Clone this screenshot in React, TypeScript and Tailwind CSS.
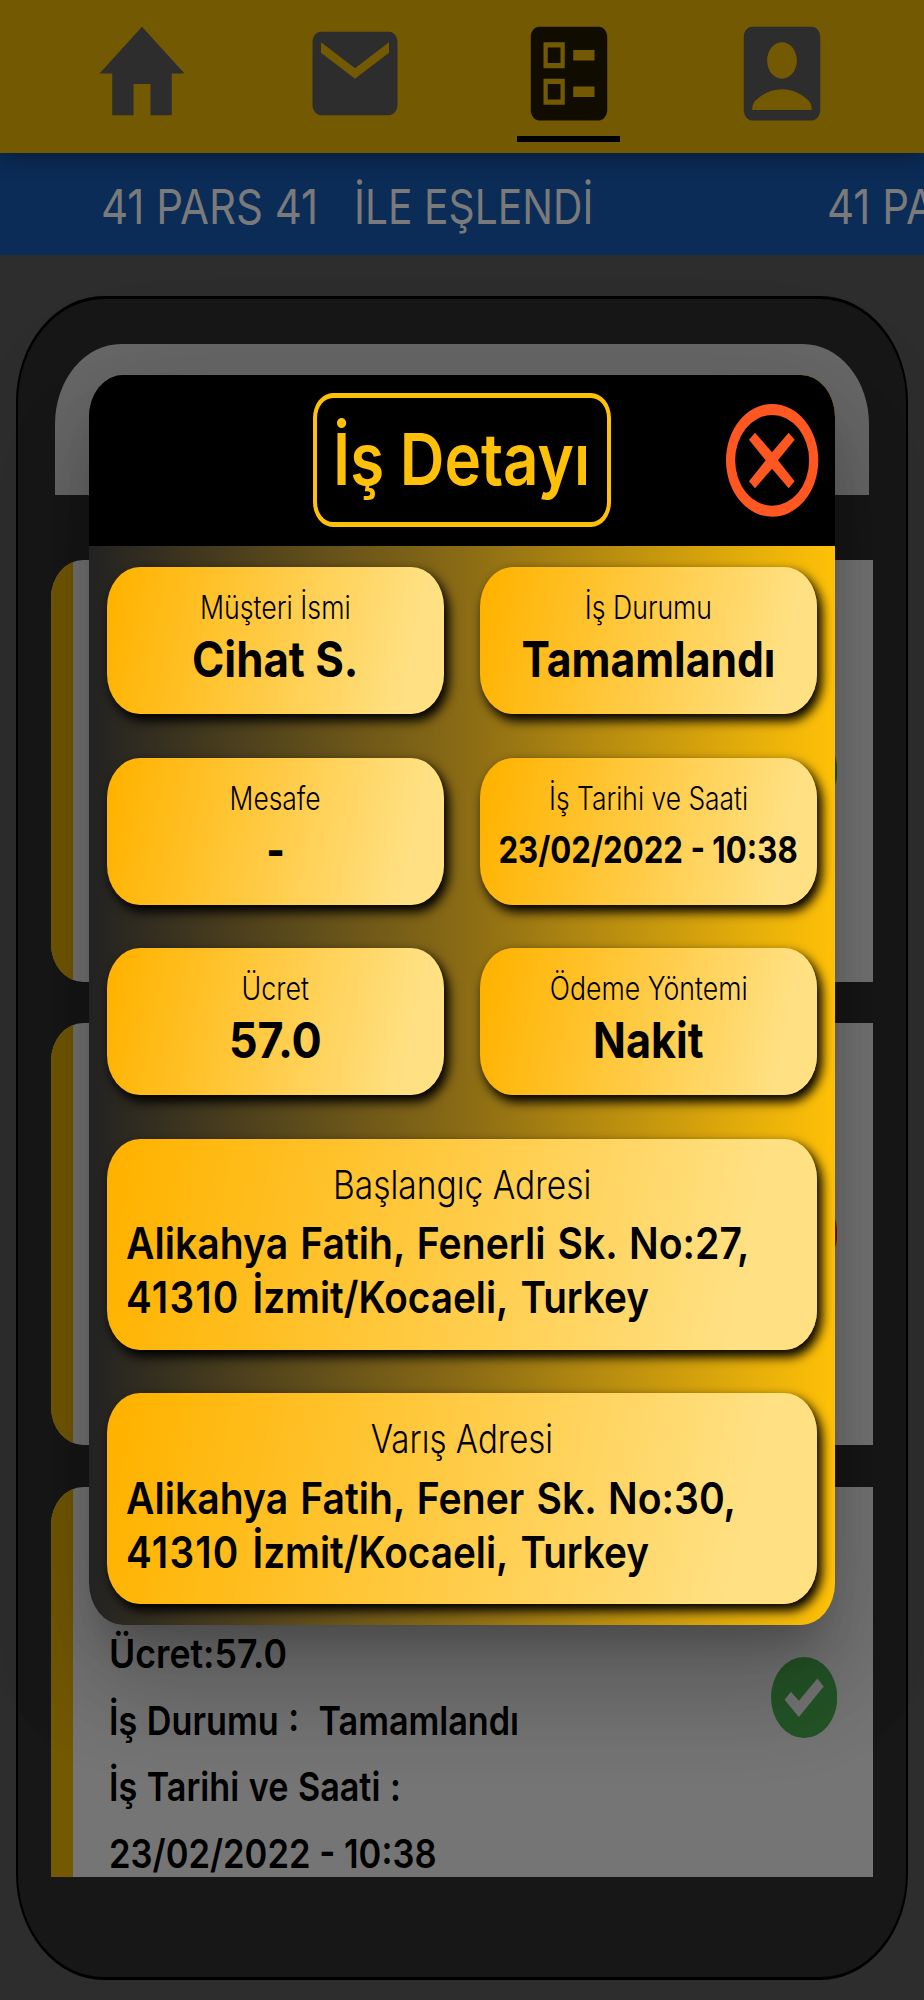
import type { ReactNode } from "react";
import { MdAccountBox, MdBallot, MdEmail, MdHome } from "react-icons/md";

function NavItem({ icon, active = false }: { icon: ReactNode; active?: boolean }) {
  return (
    <div className={`flex w-[213.3px] flex-col items-center pt-[10.5px] ${active ? "text-[#100c00]" : "text-[#2d2d2d]"}`}>
      {icon}
      {active && <div className="h-[6px] w-[103px] bg-black" />}
    </div>
  );
}

const navIcon = "h-[125px] w-[102px]";

function NavBar() {
  return (
    <nav className="relative z-10 flex h-[152.5px] bg-[#745903] pl-[35.3px] shadow-[0_5px_20px_rgba(0,0,0,0.35)]">
      <NavItem icon={<MdHome preserveAspectRatio="none" className={navIcon} />} />
      <NavItem icon={<MdEmail preserveAspectRatio="none" className={navIcon} />} />
      <NavItem active icon={<MdBallot preserveAspectRatio="none" className={navIcon} />} />
      <NavItem icon={<MdAccountBox preserveAspectRatio="none" className={navIcon} />} />
    </nav>
  );
}

function TickerText() {
  return (
    <div className="flex w-[725.5px] shrink-0 whitespace-nowrap">
      <span className="w-[253px] origin-left scale-x-[0.875]">41 PARS 41</span>
      <span className="origin-left scale-x-[0.85]">İLE EŞLENDİ</span>
    </div>
  );
}

function Ticker() {
  return (
    <div className="flex h-[102.5px] overflow-hidden bg-[#0b2c57] pt-[3px] pl-[101px] text-[48px] leading-[102px] text-[#7a7a7a]">
      <TickerText />
      <TickerText />
    </div>
  );
}

function StatusBadge({ ok }: { ok: boolean }) {
  return (
    <svg
      viewBox="93 109 200 244"
      preserveAspectRatio="none"
      className={`mt-[170px] mr-[35.3px] h-[81px] w-[66.3px] ${ok ? "text-[#245427]" : "text-[#7a1411]"}`}
    >
      <ellipse cx="193" cy="231" rx="100" ry="122" fill="currentColor" />
      {ok ? (
        <path d="M134 238 153 214 177 241 233 174 252 198 177 290Z" fill="#757575" />
      ) : (
        <path d="M150 190 236 272M236 190 150 272" stroke="#757575" strokeWidth="24" />
      )}
    </svg>
  );
}

function JobCard({ ok, children }: { ok: boolean; children?: ReactNode }) {
  return (
    <div className="flex h-[422px] shrink-0 overflow-hidden rounded-l-[32px_38px] bg-[#757575]">
      <div className="w-[22.3px] bg-[#745903]" />
      <div className="flex flex-1 flex-col items-start pt-[134.8px] pl-[36.2px] text-[39.7px] leading-[66.4px] font-semibold whitespace-pre text-black">
        {children}
      </div>
      <StatusBadge ok={ok} />
    </div>
  );
}

function Phone() {
  return (
    <div className="mr-[16.5px] ml-[16.3px] mt-[41.2px] h-[1683.5px] rounded-[88px/106px] border-x-2 border-y-[3px] border-black bg-[#171717] pt-[44.5px]">
      <div className="mr-[36.8px] ml-[36.7px] h-[151px] rounded-t-[66px_80px] bg-[#686868]" />
      <div className="mr-[32.8px] ml-[32.5px] mt-[65.3px] flex h-[1317px] flex-col gap-[41.3px] overflow-hidden">
        <JobCard ok />
        <JobCard ok={false} />
        <JobCard ok>
          <span className="origin-left scale-x-[0.899]">Ücret:57.0</span>
          <span className="origin-left scale-x-[0.861] [word-spacing:1.2px]">{"İş Durumu :  Tamamlandı"}</span>
          <span className="origin-left scale-x-[0.86] [word-spacing:1.2px]">İş Tarihi ve Saati :</span>
          <span className="origin-left scale-x-[0.871]">23/02/2022 - 10:38</span>
        </JobCard>
      </div>
    </div>
  );
}

const tile =
  "flex flex-col rounded-[33px/40px] bg-[linear-gradient(101deg,#ffb300_3%,#ffe082_88%)] shadow-[4px_6px_11px_1px_#000000]";

function InfoTile({ label, labelScale, value, valueStyle }: { label: string; labelScale: string; value: string; valueStyle: string }) {
  return (
    <div className={`${tile} h-[147px] items-center pt-[21.2px] whitespace-nowrap`}>
      <span className={`text-[32px] leading-[40px] font-light ${labelScale}`}>{label}</span>
      <span className={`leading-[62px] font-bold ${valueStyle}`}>{value}</span>
    </div>
  );
}

interface AddressTileProps {
  label: string;
  labelScale: string;
  street: string;
  postcode: string;
  city: string;
}

function AddressTile({ label, labelScale, street, postcode, city }: AddressTileProps) {
  return (
    <div className={`${tile} col-span-2 h-[211px] items-start pt-[19px] pl-[19px] whitespace-nowrap`}>
      <span className={`-ml-[19px] self-center text-[39.5px] leading-[54px] font-light ${labelScale}`}>{label}</span>
      <div className="mt-[4.5px] text-[44px] leading-[54.3px] font-semibold">
        <div className="origin-left scale-x-[0.889] [word-spacing:2.6px]">{street}</div>
        <div className="origin-left scale-x-[0.88] [word-spacing:3.5px]">
          <span className="tracking-[1.4px]">{postcode}</span> {city}
        </div>
      </div>
    </div>
  );
}

function CloseIcon() {
  return (
    <svg viewBox="794 373 277 338" preserveAspectRatio="none" className="h-[112.7px] w-[92.3px]" fill="#ff5722">
      <path
        fillRule="evenodd"
        d="M932.5 373A138.5 169 0 0 1 932.5 711A138.5 169 0 0 1 932.5 373ZM932.5 406A111 136 0 0 0 932.5 678A111 136 0 0 0 932.5 406Z"
      />
      <path d="M881 459 932 518 982 459 1000 480 950 542 1000 605 982 626 932 567 881 626 863 605 913 542 863 480Z" />
    </svg>
  );
}

function DetailModal() {
  return (
    <div className="absolute top-[375px] left-[89.3px] z-20 h-[1250px] w-[745.4px] rounded-[34px/42px] bg-[linear-gradient(90deg,#222222,#8a6b15_50%,#ffc107)] text-black shadow-[0_30px_37px_-17px_rgba(0,0,0,0.2),0_66px_95px_7px_rgba(0,0,0,0.14),0_25px_115px_20px_rgba(0,0,0,0.12)]">
      <header className="grid h-[170.5px] grid-cols-[1fr_298.6px_1fr] rounded-t-[34px_42px] bg-black">
        <div className="col-start-2 mt-[18.3px] flex h-[134px] justify-center rounded-[20px/25px] border-x-4 border-y-[5px] border-[#ffc107] pt-[1px] text-[71.5px] leading-[121px] font-semibold whitespace-nowrap text-[#ffc107]">
          <span className="scale-x-[0.865]">İş Detayı</span>
        </div>
        <div className="mt-[29.3px] mr-[16px] flex justify-end">
          <CloseIcon />
        </div>
      </header>
      <div className="grid grid-cols-[337px_337px] gap-x-[36px] gap-y-[43.5px] pt-[21.7px] pl-[17.7px]">
        <InfoTile label="Müşteri İsmi" labelScale="scale-x-[0.835]" value="Cihat S." valueStyle="text-[49.5px] scale-x-[0.884]" />
        <InfoTile label="İş Durumu" labelScale="scale-x-[0.832]" value="Tamamlandı" valueStyle="text-[49.5px] scale-x-[0.861]" />
        <InfoTile label="Mesafe" labelScale="scale-x-[0.826]" value="-" valueStyle="text-[49.5px] scale-x-[0.806]" />
        <InfoTile label="İş Tarihi ve Saati" labelScale="scale-x-[0.825]" value="23/02/2022 - 10:38" valueStyle="text-[36.7px] scale-x-[0.85]" />
        <InfoTile label="Ücret" labelScale="scale-x-[0.839]" value="57.0" valueStyle="text-[49.5px] scale-x-[0.905]" />
        <InfoTile label="Ödeme Yöntemi" labelScale="scale-x-[0.833]" value="Nakit" valueStyle="text-[49.5px] scale-x-[0.872]" />
        <AddressTile
          label="Başlangıç Adresi"
          labelScale="scale-x-[0.849]"
          street="Alikahya Fatih, Fenerli Sk. No:27,"
          postcode="41310"
          city="İzmit/Kocaeli, Turkey"
        />
        <AddressTile
          label="Varış Adresi"
          labelScale="scale-x-[0.837]"
          street="Alikahya Fatih, Fener Sk. No:30,"
          postcode="41310"
          city="İzmit/Kocaeli, Turkey"
        />
      </div>
    </div>
  );
}

export default function App() {
  return (
    <div className="relative h-[2000px] w-[924px] overflow-hidden bg-[#2d2d2d] font-['Inter',sans-serif]">
      <NavBar />
      <Ticker />
      <Phone />
      <DetailModal />
    </div>
  );
}
